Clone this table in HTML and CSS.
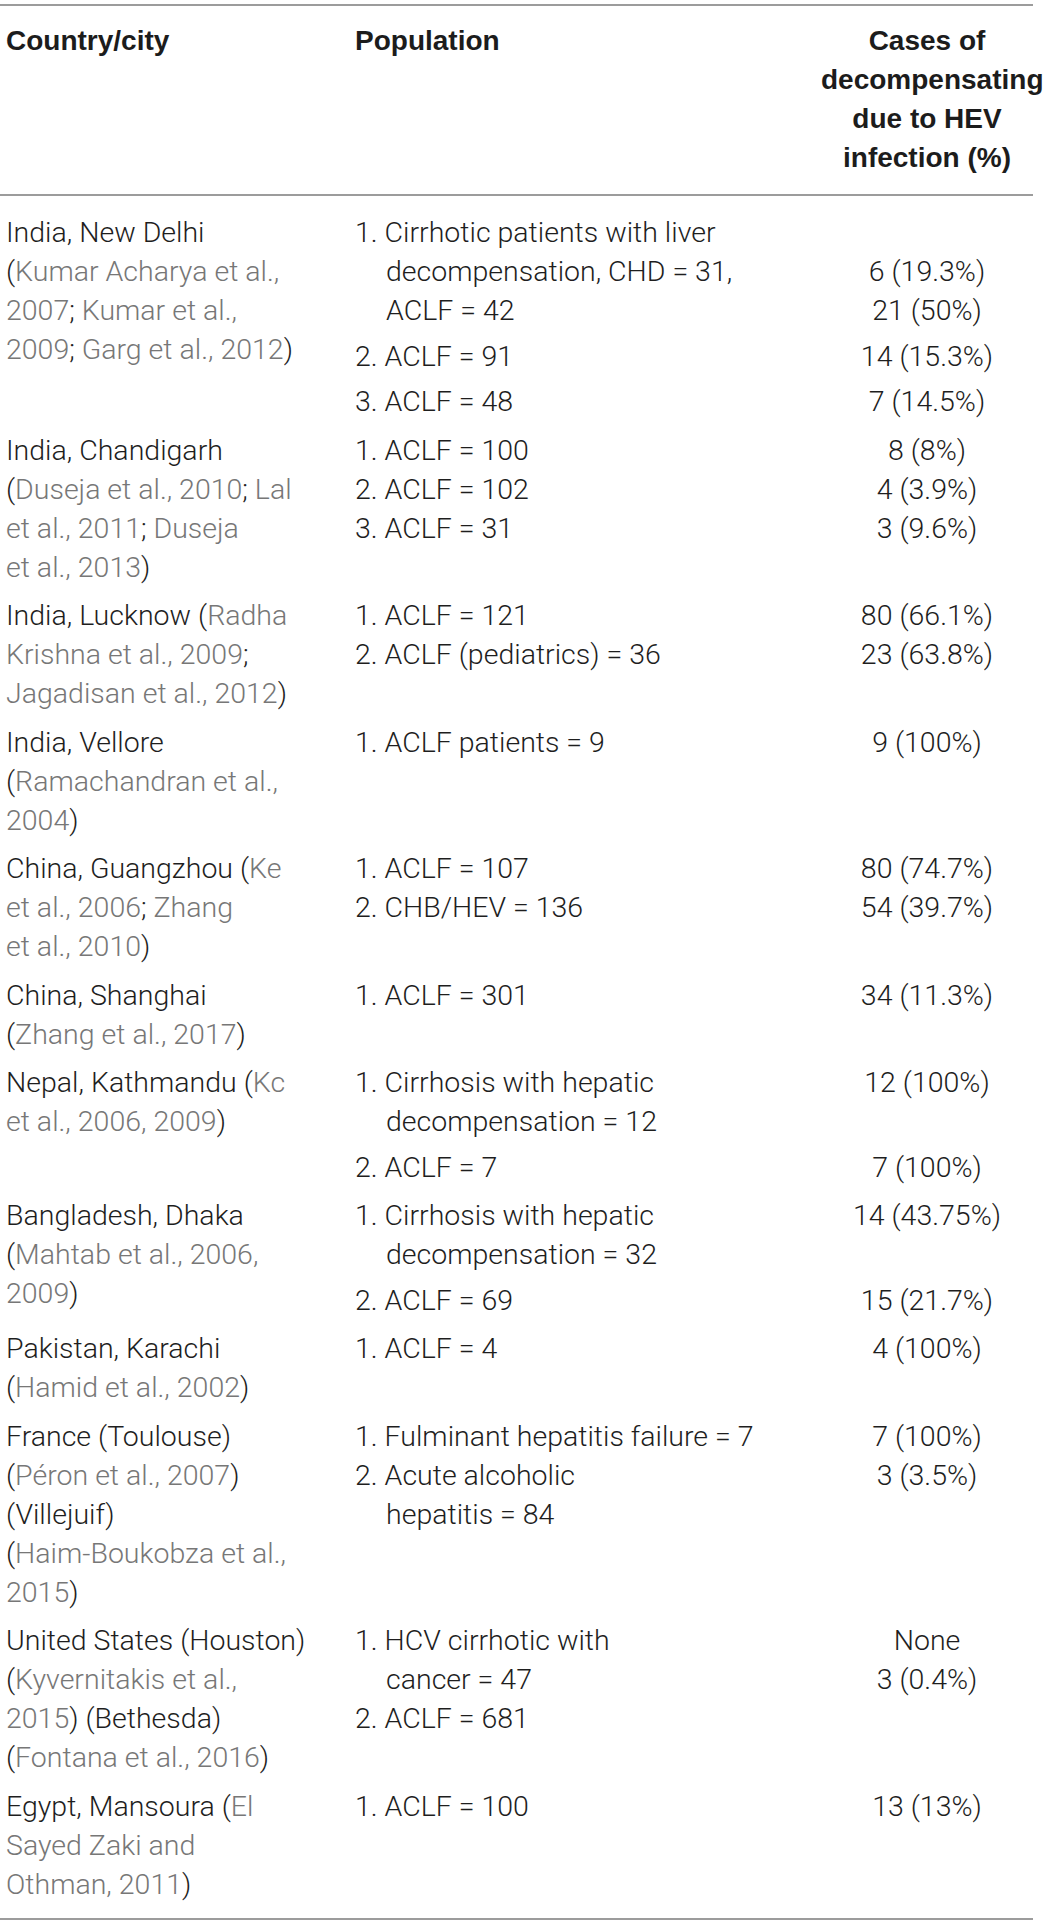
FILE: index.html
```html
<!DOCTYPE html>
<html lang="en">
<head>
<meta charset="utf-8">
<title>HEV decompensation table</title>
<link rel="stylesheet" href="styles.css">
</head>
<body>
<div class="table">
  <div class="thead">
    <div class="c1">Country/city</div>
    <div class="c2">Population</div>
    <div class="c3">Cases of<br>decompensating<br>due to HEV<br>infection (%)</div>
  </div>
  <div class="tbody">
    <div class="row">
      <div class="c1">India, New Delhi<br>(<span class="ref">Kumar Acharya et al.,<br>2007</span>; <span class="ref">Kumar et al.,<br>2009</span>; <span class="ref">Garg et al., 2012</span>)</div>
      <div class="group">
        <div class="sub">
          <div class="pop"><div class="item">1. Cirrhotic patients with liver<br>decompensation, CHD = 31,<br>ACLF = 42</div></div>
          <div class="c3"><br>6 (19.3%)<br>21 (50%)</div>
        </div>
        <div class="sub">
          <div class="pop"><div class="item">2. ACLF = 91</div></div>
          <div class="c3">14 (15.3%)</div>
        </div>
        <div class="sub">
          <div class="pop"><div class="item">3. ACLF = 48</div></div>
          <div class="c3">7 (14.5%)</div>
        </div>
      </div>
    </div>

    <div class="row">
      <div class="c1">India, Chandigarh<br>(<span class="ref">Duseja et al., 2010</span>; <span class="ref">Lal<br>et al., 2011</span>; <span class="ref">Duseja<br>et al., 2013</span>)</div>
      <div class="group">
        <div class="sub">
          <div class="pop">
            <div class="item">1. ACLF = 100</div>
            <div class="item">2. ACLF = 102</div>
            <div class="item">3. ACLF = 31</div>
          </div>
          <div class="c3">8 (8%)<br>4 (3.9%)<br>3 (9.6%)</div>
        </div>
      </div>
    </div>

    <div class="row">
      <div class="c1">India, Lucknow (<span class="ref">Radha<br>Krishna et al., 2009</span>;<br><span class="ref">Jagadisan et al., 2012</span>)</div>
      <div class="group">
        <div class="sub">
          <div class="pop">
            <div class="item">1. ACLF = 121</div>
            <div class="item">2. ACLF (pediatrics) = 36</div>
          </div>
          <div class="c3">80 (66.1%)<br>23 (63.8%)</div>
        </div>
      </div>
    </div>

    <div class="row">
      <div class="c1">India, Vellore<br>(<span class="ref">Ramachandran et al.,<br>2004</span>)</div>
      <div class="group">
        <div class="sub">
          <div class="pop"><div class="item">1. ACLF patients = 9</div></div>
          <div class="c3">9 (100%)</div>
        </div>
      </div>
    </div>

    <div class="row">
      <div class="c1">China, Guangzhou (<span class="ref">Ke<br>et al., 2006</span>; <span class="ref">Zhang<br>et al., 2010</span>)</div>
      <div class="group">
        <div class="sub">
          <div class="pop">
            <div class="item">1. ACLF = 107</div>
            <div class="item">2. CHB/HEV = 136</div>
          </div>
          <div class="c3">80 (74.7%)<br>54 (39.7%)</div>
        </div>
      </div>
    </div>

    <div class="row">
      <div class="c1">China, Shanghai<br>(<span class="ref">Zhang et al., 2017</span>)</div>
      <div class="group">
        <div class="sub">
          <div class="pop"><div class="item">1. ACLF = 301</div></div>
          <div class="c3">34 (11.3%)</div>
        </div>
      </div>
    </div>

    <div class="row">
      <div class="c1">Nepal, Kathmandu (<span class="ref">Kc<br>et al., 2006, 2009</span>)</div>
      <div class="group">
        <div class="sub">
          <div class="pop"><div class="item">1. Cirrhosis with hepatic<br>decompensation = 12</div></div>
          <div class="c3">12 (100%)</div>
        </div>
        <div class="sub">
          <div class="pop"><div class="item">2. ACLF = 7</div></div>
          <div class="c3">7 (100%)</div>
        </div>
      </div>
    </div>

    <div class="row">
      <div class="c1">Bangladesh, Dhaka<br>(<span class="ref">Mahtab et al., 2006,<br>2009</span>)</div>
      <div class="group">
        <div class="sub">
          <div class="pop"><div class="item">1. Cirrhosis with hepatic<br>decompensation = 32</div></div>
          <div class="c3">14 (43.75%)</div>
        </div>
        <div class="sub">
          <div class="pop"><div class="item">2. ACLF = 69</div></div>
          <div class="c3">15 (21.7%)</div>
        </div>
      </div>
    </div>

    <div class="row">
      <div class="c1">Pakistan, Karachi<br>(<span class="ref">Hamid et al., 2002</span>)</div>
      <div class="group">
        <div class="sub">
          <div class="pop"><div class="item">1. ACLF = 4</div></div>
          <div class="c3">4 (100%)</div>
        </div>
      </div>
    </div>

    <div class="row">
      <div class="c1">France (Toulouse)<br>(<span class="ref">Péron et al., 2007</span>)<br>(Villejuif)<br>(<span class="ref">Haim-Boukobza et al.,<br>2015</span>)</div>
      <div class="group">
        <div class="sub">
          <div class="pop">
            <div class="item">1. Fulminant hepatitis failure = 7</div>
            <div class="item">2. Acute alcoholic<br>hepatitis = 84</div>
          </div>
          <div class="c3">7 (100%)<br>3 (3.5%)</div>
        </div>
      </div>
    </div>

    <div class="row">
      <div class="c1">United States (Houston)<br>(<span class="ref">Kyvernitakis et al.,<br>2015</span>) (Bethesda)<br>(<span class="ref">Fontana et al., 2016</span>)</div>
      <div class="group">
        <div class="sub">
          <div class="pop">
            <div class="item">1. HCV cirrhotic with<br>cancer = 47</div>
            <div class="item">2. ACLF = 681</div>
          </div>
          <div class="c3">None<br>3 (0.4%)</div>
        </div>
      </div>
    </div>

    <div class="row">
      <div class="c1">Egypt, Mansoura (<span class="ref">El<br>Sayed Zaki and<br>Othman, 2011</span>)</div>
      <div class="group">
        <div class="sub">
          <div class="pop"><div class="item">1. ACLF = 100</div></div>
          <div class="c3">13 (13%)</div>
        </div>
      </div>
    </div>
  </div>
</div>
</body>
</html>
```

FILE: styles.css
```css
html, body {
  margin: 0;
  padding: 0;
  background: #ffffff;
}

body {
  font-family: Roboto, "Liberation Sans", Arial, sans-serif;
  font-weight: 300;
  color: #1e1e1e;
}

.table {
  width: 1033px;
  margin-top: 4px;
}

.thead {
  display: grid;
  grid-template-columns: 349px 472px 212px;
  border-top: 2px solid #9c9c9c;
  border-bottom: 2px solid #9c9c9c;
  padding: 15px 0 17px;
  font-family: "Liberation Sans", Arial, sans-serif;
  font-weight: bold;
  font-size: 28px;
  line-height: 39px;
  color: #1c1c1c;
}

.tbody {
  padding: 12px 0 10px;
  border-bottom: 2px solid #9c9c9c;
  font-size: 28.5px;
  line-height: 39px;
}

.row {
  display: grid;
  grid-template-columns: 349px 684px;
  padding: 5px 0 4.5px;
}

.c1 {
  padding-left: 6px;
  white-space: nowrap;
}

.c2 {
  padding-left: 6px;
  white-space: nowrap;
}

.c3 {
  text-align: center;
  white-space: nowrap;
}

.group {
  display: flex;
  flex-direction: column;
  gap: 6.5px;
}

.sub {
  display: grid;
  grid-template-columns: 472px 212px;
}

.pop {
  display: flex;
  flex-direction: column;
  white-space: nowrap;
}

.item {
  padding-left: 37px;
  text-indent: -31px;
}

.ref {
  color: #777777;
}
```
